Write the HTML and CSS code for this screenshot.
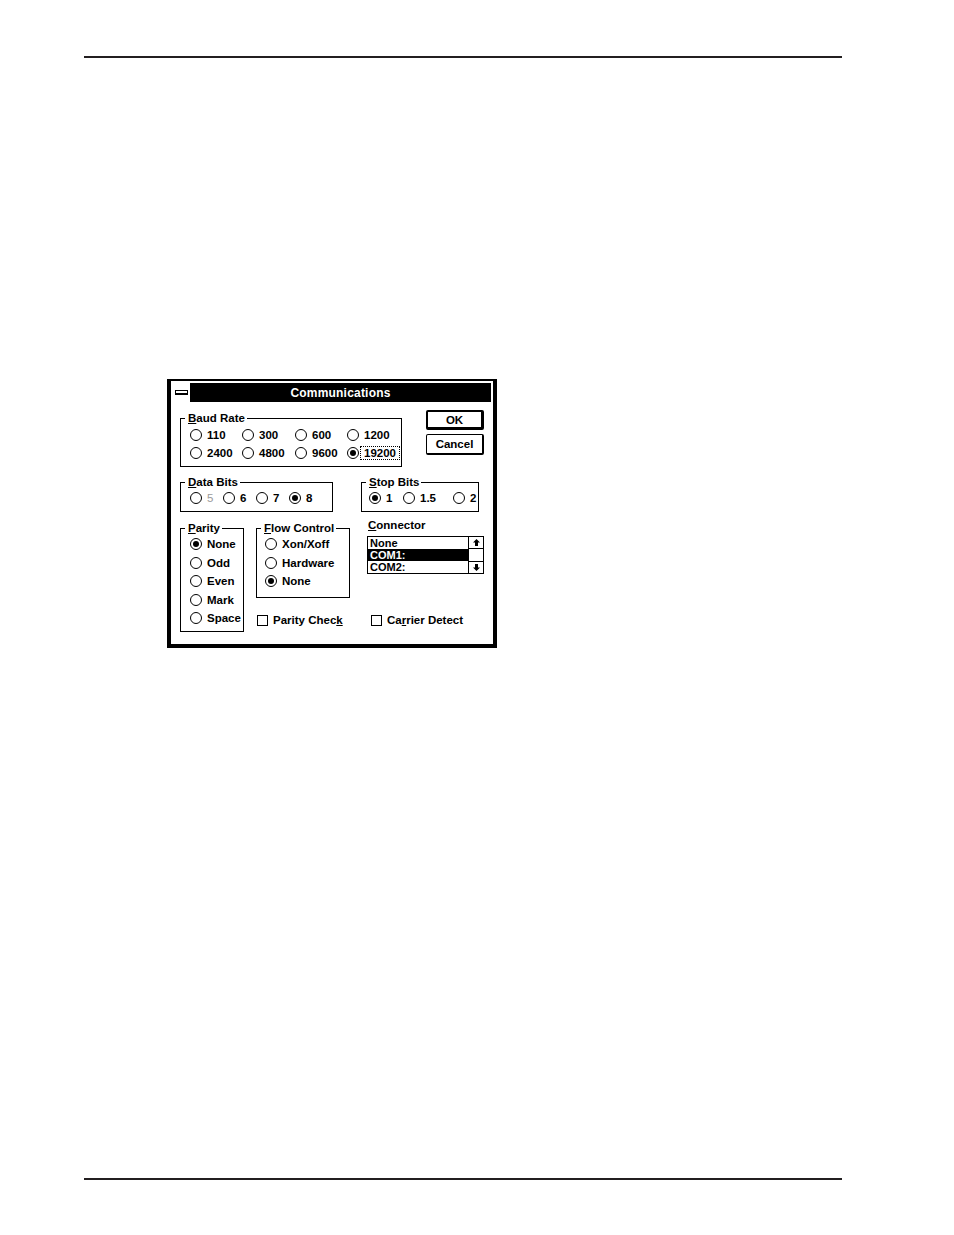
FILE: index.html
```html
<!DOCTYPE html>
<html lang="en">
<head>
<meta charset="utf-8">
<title>Communications</title>
<link rel="stylesheet" href="styles.css">
</head>
<body>
<div class="page">
  <div class="rule"></div>

  <div class="dialog">
    <div class="titlebar">
      <div class="sysmenu"><span class="sysbar"></span></div>
      <div class="title">Communications</div>
    </div>

    <div class="dbody">
      <div class="row1">
        <div class="group baud">
          <span class="legend"><u>B</u>aud Rate</span>
          <div class="grid baud-grid">
            <div class="opt"><span class="radio"></span><span class="txt">110</span></div>
            <div class="opt"><span class="radio"></span><span class="txt">300</span></div>
            <div class="opt"><span class="radio"></span><span class="txt">600</span></div>
            <div class="opt"><span class="radio"></span><span class="txt">1200</span></div>
            <div class="opt"><span class="radio"></span><span class="txt">2400</span></div>
            <div class="opt"><span class="radio"></span><span class="txt">4800</span></div>
            <div class="opt"><span class="radio"></span><span class="txt">9600</span></div>
            <div class="opt"><span class="radio on"></span><span class="txt focus">19200</span></div>
          </div>
        </div>
        <div class="buttons">
          <div class="btn default">OK</div>
          <div class="btn cancel">Cancel</div>
        </div>
      </div>

      <div class="row2">
        <div class="group databits">
          <span class="legend"><u>D</u>ata Bits</span>
          <div class="grid data-grid">
            <div class="opt"><span class="radio"></span><span class="txt gray">5</span></div>
            <div class="opt"><span class="radio"></span><span class="txt">6</span></div>
            <div class="opt"><span class="radio"></span><span class="txt">7</span></div>
            <div class="opt"><span class="radio on"></span><span class="txt">8</span></div>
          </div>
        </div>
        <div class="group stopbits">
          <span class="legend"><u>S</u>top Bits</span>
          <div class="grid stop-grid">
            <div class="opt"><span class="radio on"></span><span class="txt">1</span></div>
            <div class="opt"><span class="radio"></span><span class="txt">1.5</span></div>
            <div class="opt"><span class="radio"></span><span class="txt">2</span></div>
          </div>
        </div>
      </div>

      <div class="row3">
        <div class="group parity">
          <span class="legend"><u>P</u>arity</span>
          <div class="col-list">
            <div class="opt tall"><span class="radio on"></span><span class="txt">None</span></div>
            <div class="opt tall"><span class="radio"></span><span class="txt">Odd</span></div>
            <div class="opt tall"><span class="radio"></span><span class="txt">Even</span></div>
            <div class="opt tall"><span class="radio"></span><span class="txt">Mark</span></div>
            <div class="opt tall"><span class="radio"></span><span class="txt">Space</span></div>
          </div>
        </div>

        <div class="rightcol">
          <div class="toprow">
            <div class="group flow">
              <span class="legend"><u>F</u>low Control</span>
              <div class="col-list flow-list">
                <div class="opt tall"><span class="radio"></span><span class="txt">Xon/Xoff</span></div>
                <div class="opt tall"><span class="radio"></span><span class="txt">Hardware</span></div>
                <div class="opt tall"><span class="radio on"></span><span class="txt">None</span></div>
              </div>
            </div>
            <div class="connector">
              <div class="conn-label"><u>C</u>onnector</div>
              <div class="listbox">
                <div class="items">
                  <div class="item">None</div>
                  <div class="item sel">COM1:</div>
                  <div class="item">COM2:</div>
                </div>
                <div class="scroll">
                  <div class="sbtn"><svg width="7" height="7" viewBox="0 0 7 7"><path d="M3.5 0 L7 3.5 H5 V7 H2 V3.5 H0 Z" fill="#000"/></svg></div>
                  <div class="strack"></div>
                  <div class="sbtn down"><svg width="7" height="7" viewBox="0 0 7 7"><path d="M3.5 7 L7 3.5 H5 V0 H2 V3.5 H0 Z" fill="#000"/></svg></div>
                </div>
              </div>
            </div>
          </div>
          <div class="checks">
            <div class="opt"><span class="check"></span><span class="ctxt">Parity Chec<u>k</u></span></div>
            <div class="opt"><span class="check"></span><span class="ctxt">Ca<u>r</u>rier Detect</span></div>
          </div>
        </div>
      </div>
    </div>
  </div>

  <div class="rule bottom"></div>
</div>
</body>
</html>
```

FILE: styles.css
```css
html, body {
  margin: 0;
  background: #fff;
}

body {
  font-family: "Liberation Sans", Arial, sans-serif;
  font-weight: bold;
  font-size: 11.5px;
  color: #000;
}

u {
  text-decoration-thickness: 1px;
  text-underline-offset: 1px;
}

.page {
  width: 954px;
  height: 1235px;
  padding-top: 56px;
  box-sizing: border-box;
}

.rule {
  margin-left: 84px;
  width: 758px;
  height: 2px;
  background: #231f20;
}

.rule.bottom {
  margin-top: 530px;
}

/* dialog frame */
.dialog {
  margin: 321px 0 0 167px;
  width: 330px;
  height: 269px;
  box-sizing: border-box;
  border: 4px solid #000;
  border-top-width: 2px;
  padding: 2px 2px 0 0;
  background: #fff;
}

.titlebar {
  display: flex;
  height: 19px;
  background: #000;
}

.sysmenu {
  width: 19px;
  height: 19px;
  background: #fff;
  display: flex;
  align-items: center;
  justify-content: center;
}

.sysbar {
  width: 11px;
  height: 2px;
  border: 1px solid #000;
  border-bottom-width: 2px;
  background: #fff;
  margin-left: 1px;
}

.title {
  flex: 1;
  color: #fff;
  text-align: center;
  padding-top: 2px;
  line-height: 17px;
  font-size: 12px;
  letter-spacing: 0.2px;
}

.dbody {
  padding-left: 9px;
}

/* group boxes */
.group {
  border: 1px solid #000;
  box-sizing: border-box;
}

.legend {
  display: block;
  width: max-content;
  height: 12px;
  line-height: 12px;
  margin: -7px 0 0 4px;
  padding: 0 2px 0 3px;
  background: #fff;
  white-space: nowrap;
}

.grid {
  display: grid;
  grid-auto-rows: 16px;
}

.opt {
  display: flex;
  align-items: center;
  height: 16px;
  white-space: nowrap;
}

.opt.tall {
  height: 18.5px;
}

.radio {
  flex: none;
  width: 12px;
  height: 12px;
  box-sizing: border-box;
  border: 1px solid #000;
  border-radius: 50%;
  display: flex;
  align-items: center;
  justify-content: center;
}

.radio.on::after {
  content: "";
  width: 6px;
  height: 6px;
  border-radius: 50%;
  background: #000;
}

.txt {
  margin-left: 5px;
  line-height: 12px;
}

.txt.focus {
  margin-left: 1px;
  padding: 0 3px 0 3px;
  border: 1px dotted #000;
}

.txt.gray {
  color: #9a9a9a;
  font-weight: normal;
}

/* row 1 */
.row1 {
  display: flex;
  align-items: flex-start;
}

.baud {
  margin-top: 16px;
  width: 222px;
  height: 49px;
}

.baud-grid {
  margin-top: 3px;
  padding-left: 9px;
  grid-template-columns: 52px 53px 52px auto;
  row-gap: 2px;
}

.buttons {
  margin-left: 24px;
  width: 58px;
  display: flex;
  flex-direction: column;
}

.btn {
  box-sizing: border-box;
  border: 1px solid #000;
  border-right-width: 2px;
  border-bottom-width: 2px;
  border-radius: 2px;
  display: flex;
  align-items: center;
  justify-content: center;
}

.btn.default {
  margin-top: 8px;
  height: 20px;
  border-width: 2px 3px 3px 2px;
}

.btn.cancel {
  margin-top: 4px;
  height: 21px;
}

/* row 2 */
.row2 {
  display: flex;
  margin-top: 15px;
}

.databits {
  width: 153px;
  height: 30px;
}

.data-grid {
  margin-top: 2px;
  padding-left: 9px;
  grid-template-columns: 33px 33px 33px auto;
}

.stopbits {
  margin-left: 28px;
  width: 118px;
  height: 30px;
}

.stop-grid {
  margin-top: 2px;
  padding-left: 7px;
  grid-template-columns: 34px 50px auto;
}

/* row 3 */
.row3 {
  display: flex;
  margin-top: 16px;
}

.parity {
  width: 64px;
  height: 104px;
}

.col-list {
  margin-top: 1px;
  padding-left: 9px;
  display: flex;
  flex-direction: column;
}

.col-list.flow-list {
  padding-left: 8px;
}

.rightcol {
  margin-left: 12px;
  display: flex;
  flex-direction: column;
}

.toprow {
  display: flex;
  align-items: flex-start;
}

.flow {
  width: 94px;
  height: 70px;
}

.connector {
  margin-left: 17px;
  width: 117px;
}

.conn-label {
  margin-top: -9px;
  height: 12px;
  line-height: 12px;
  padding-left: 1px;
}

.listbox {
  margin-top: 5px;
  height: 38px;
  box-sizing: border-box;
  border: 1px solid #000;
  display: flex;
}

.items {
  flex: 1;
  display: flex;
  flex-direction: column;
}

.item {
  height: 12px;
  line-height: 12px;
  padding-left: 2px;
  font-size: 11px;
}

.item.sel {
  background: #000;
  color: #fff;
}

.scroll {
  width: 15px;
  box-sizing: border-box;
  border-left: 1px solid #000;
  display: flex;
  flex-direction: column;
}

.sbtn {
  height: 12px;
  box-sizing: border-box;
  border-bottom: 1px solid #000;
  display: flex;
  align-items: center;
  justify-content: center;
}

.sbtn.down {
  border-bottom: none;
  border-top: 1px solid #000;
}

.strack {
  flex: 1;
  background: #fff;
}

.checks {
  margin-top: 14px;
  display: grid;
  grid-template-columns: 115px auto;
}

.checks .opt:first-child {
  padding-left: 1px;
}

.check {
  flex: none;
  width: 11px;
  height: 11px;
  box-sizing: border-box;
  border: 1px solid #000;
}

.ctxt {
  margin-left: 5px;
  line-height: 12px;
}
```
